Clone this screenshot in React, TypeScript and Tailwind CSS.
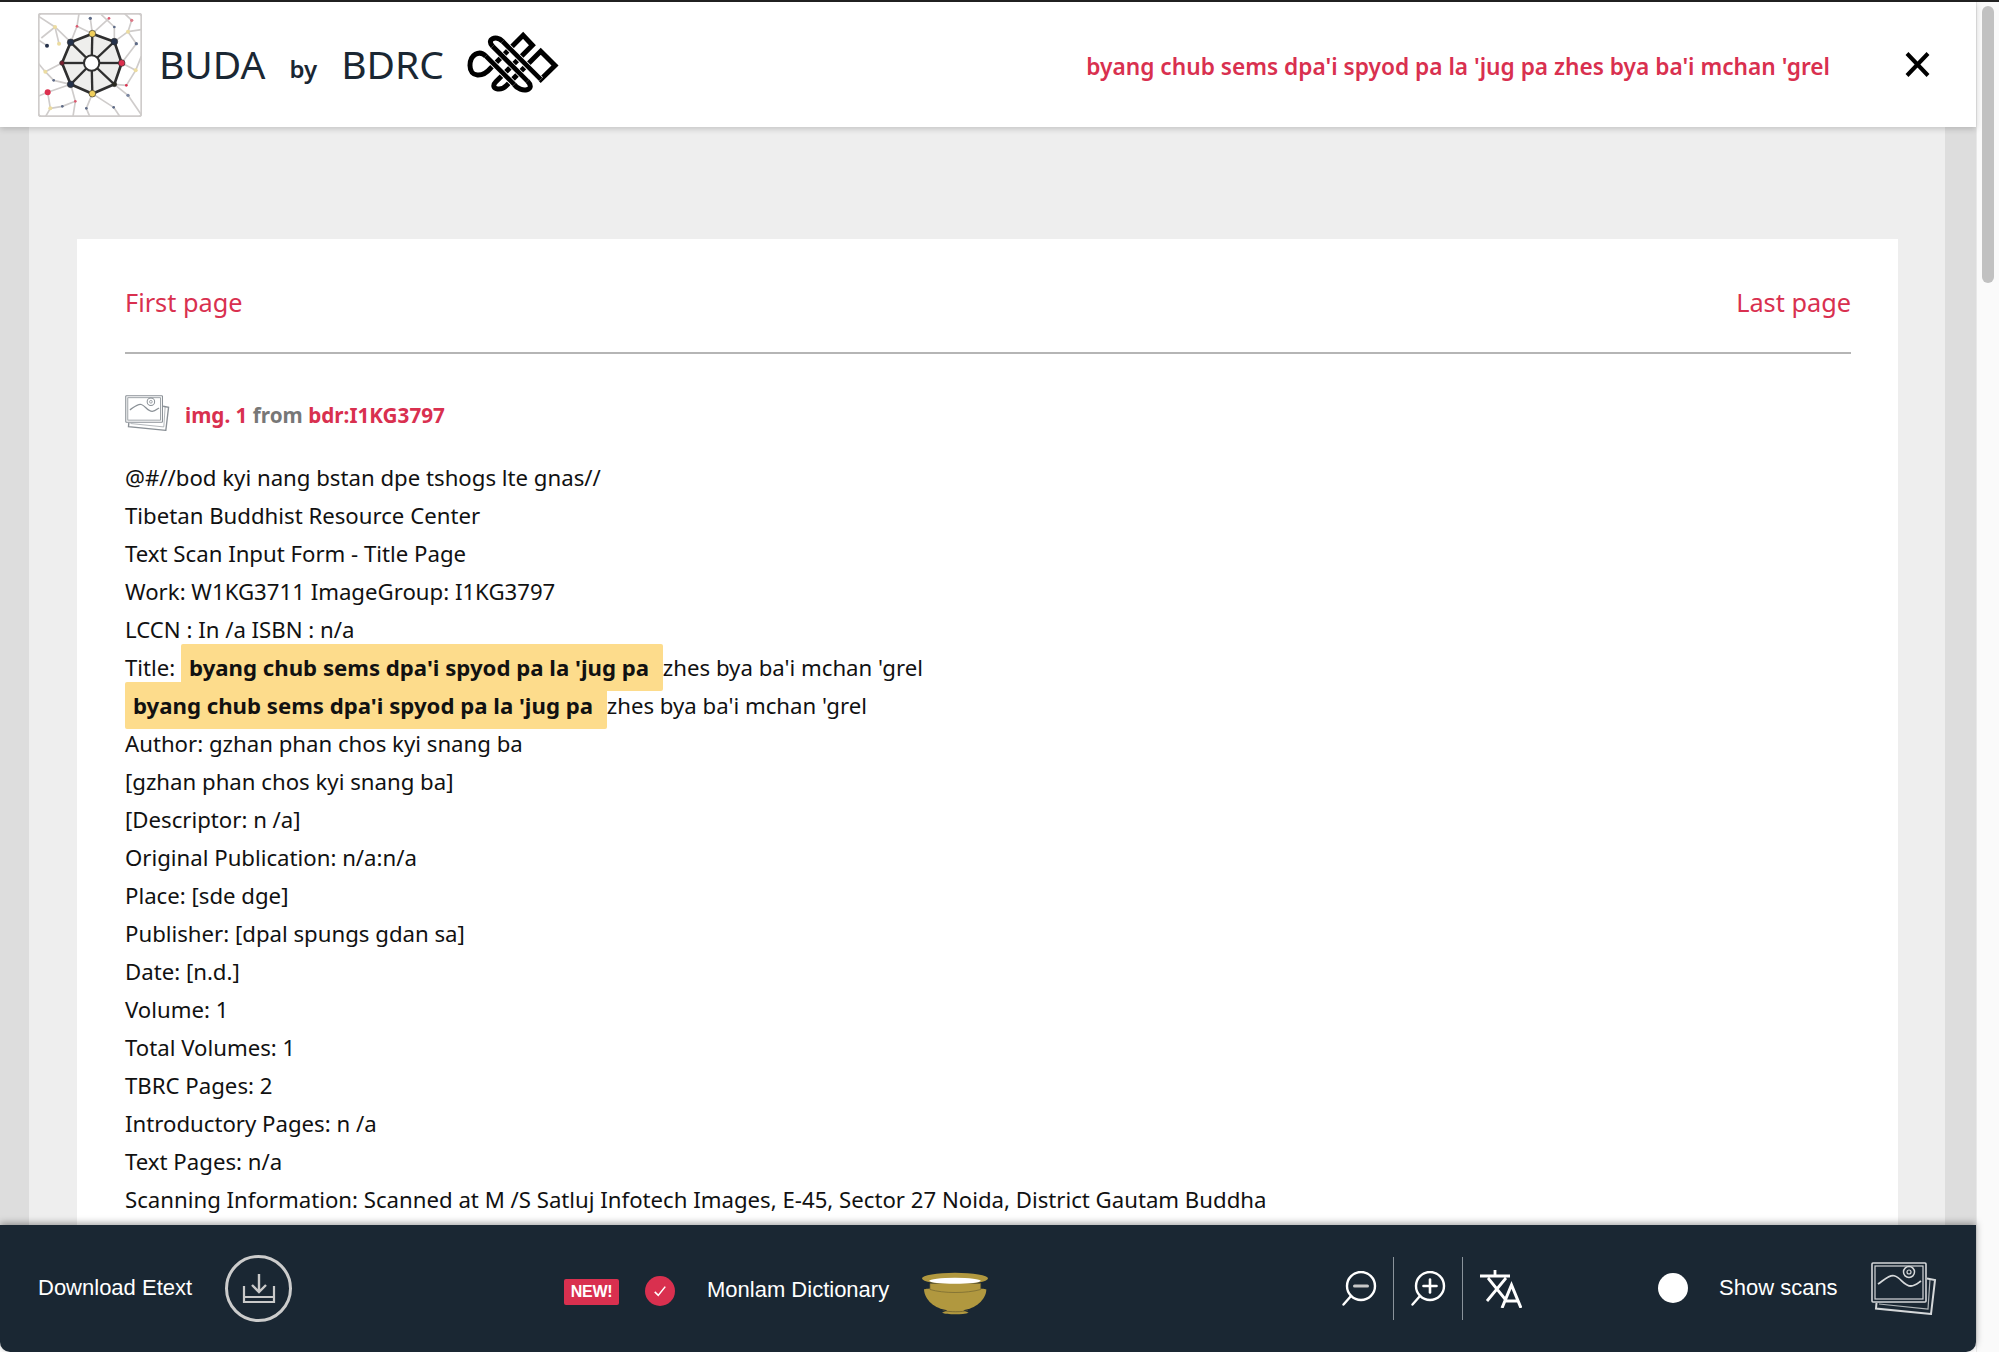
const lines = [
  "@#//bod kyi nang bstan dpe tshogs lte gnas//",
  "Tibetan Buddhist Resource Center",
  "Text Scan Input Form - Title Page",
  "Work: W1KG3711 ImageGroup: I1KG3797",
  "LCCN : In /a ISBN : n/a",
];

const linesAfter = [
  "Author: gzhan phan chos kyi snang ba",
  "[gzhan phan chos kyi snang ba]",
  "[Descriptor: n /a]",
  "Original Publication: n/a:n/a",
  "Place: [sde dge]",
  "Publisher: [dpal spungs gdan sa]",
  "Date: [n.d.]",
  "Volume: 1",
  "Total Volumes: 1",
  "TBRC Pages: 2",
  "Introductory Pages: n /a",
  "Text Pages: n/a",
  "Scanning Information: Scanned at M /S Satluj Infotech Images, E-45, Sector 27 Noida, District Gautam Buddha",
];

const octagon: [number, number, string, number][] = [
  [188, 82, "#f0cf5c", 10],
  [254, 106, "#25324a", 10],
  [276, 170, "#dc2f4e", 10],
  [254, 234, "#2a2a20", 7],
  [188, 262, "#f0cf5c", 10],
  [123, 234, "#25324a", 10],
  [97, 170, "#7a1f30", 7],
  [123, 108, "#25324a", 10],
];

const netLines = [
  "M27 30L76 62L124 108", "M76 62L35 95", "M76 62L88 112", "M148 22L142 60L123 108", "M142 60L188 82", "M182 36L188 82",
  "M238 36L188 82", "M254 62L254 106", "M254 62L215 25", "M295 76L254 106", "M295 76L306 42L285 22", "M295 76L335 70",
  "M320 112L276 170", "M320 112L295 76", "M318 192L276 170", "M318 192L335 150", "M290 237L254 234", "M290 237L318 192",
  "M295 267L254 234", "M295 267L335 325", "M252 303L188 262", "M252 303L270 330", "M170 306L188 262", "M170 306L180 330",
  "M137 285L123 234", "M137 285L98 300L62 306", "M62 306L54 258L123 234", "M54 258L25 270", "M72 222L123 234", "M72 222L47 196L97 170",
  "M47 196L25 170", "M62 306L48 330", "M137 285L130 330", "M52 118L25 100",
];

const netDots: [number, number, string, number][] = [
  [76, 62, "#ecdca0", 6], [52, 118, "#25324a", 6], [88, 112, "#ecdca0", 6], [142, 60, "#dc5a70", 4],
  [182, 36, "#5d6a86", 5], [238, 36, "#dc5a70", 4], [306, 42, "#dc7a88", 5], [254, 62, "#5d6a86", 4],
  [295, 76, "#ecdca0", 6], [320, 112, "#5d6a86", 5], [318, 192, "#ecdca0", 6], [290, 237, "#dc2f4e", 4],
  [295, 267, "#7a86a0", 5], [252, 303, "#5d6a86", 4], [170, 306, "#5d6a86", 4], [137, 285, "#dc5a70", 4],
  [98, 300, "#5d6a86", 4], [62, 306, "#ecdca0", 6], [54, 258, "#dc2f4e", 9], [72, 222, "#5d6a86", 4], [47, 196, "#ecdca0", 6],
];

function Logo() {
  return (
    <svg viewBox="25 20 312 312" className="h-[104px] w-[104px] shrink-0" aria-hidden>
      <rect x="27" y="22" width="308" height="308" rx="8" fill="#fff" stroke="#cfcccb" strokeWidth="6" />
      {netLines.map((d) => (
        <path key={d} d={d} fill="none" stroke="#cfcccb" strokeWidth="5" />
      ))}
      {netDots.map(([x, y, c, r]) => (
        <circle key={`${x}-${y}`} cx={x} cy={y} r={r} fill={c} />
      ))}
      <polygon points={octagon.map(([x, y]) => `${x},${y}`).join(" ")} fill="#eeeeec" stroke="#2f2f2f" strokeWidth="8" strokeLinejoin="round" />
      {octagon.map(([x, y]) => (
        <line key={`s${x}-${y}`} x1={x} y1={y} x2="186" y2="170" stroke="#2f2f2f" strokeWidth="7" />
      ))}
      <circle cx="186" cy="170" r="23" fill="#fff" stroke="#2f2f2f" strokeWidth="6" />
      {octagon.map(([x, y, c, r]) => (
        <circle key={`d${x}-${y}`} cx={x} cy={y} r={r} fill={c} stroke="#2f2f2f" strokeWidth="2" />
      ))}
    </svg>
  );
}

function Knot() {
  const over = "M110 105L195 190M235 180L130 75M160 60L275 175";
  return (
    <svg viewBox="50 30 280 200" className="ml-[22px] h-[67px] w-[93px] shrink-0" aria-hidden>
      <path
        d="M110 105L195 190C215 218 263 208 235 180L130 75C110 55 140 40 160 60L275 175L318 133L275 90L172 193C152 213 120 202 140 182L250 72L222 42L125 140C100 170 62 170 62 133C62 100 90 85 110 105Z"
        fill="none"
        stroke="#000"
        strokeWidth="15"
      />
      <path d={over} fill="none" stroke="#fff" strokeWidth="19" />
      <path d={over} fill="none" stroke="#000" strokeWidth="14" />
    </svg>
  );
}

function ImagesIcon({ className, color }: { className: string; color: string }) {
  return (
    <svg viewBox="0 0 66 53" fill="none" stroke={color} className={className} aria-hidden>
      <path d="M56 16.5L64 18L60 52L5 46.5L5.5 41" strokeWidth="2" />
      <path d="M8 42L57 47L59 17" strokeWidth="1.2" opacity="0.8" />
      <rect x="1" y="1" width="54" height="39" rx="1" strokeWidth="1.6" />
      <rect x="4" y="4" width="48" height="33" strokeWidth="1.2" />
      <path d="M7 22C13 18 19 12 24 14C30 16 33 24 40 24C44 24 47 21 50 19" strokeWidth="1.8" />
      <circle cx="38" cy="10" r="5.5" strokeWidth="1.5" />
      <circle cx="38" cy="10" r="2" strokeWidth="1.2" />
    </svg>
  );
}

function ZoomIcon({ plus }: { plus?: boolean }) {
  return (
    <svg viewBox="0 0 35 35" fill="none" stroke="#fff" strokeWidth="2.4" className="h-[35px] w-[35px] shrink-0" aria-hidden>
      <circle cx="19" cy="15" r="14" />
      <path d="M9 25L1.5 33.5" strokeLinecap="round" />
      <path d="M12.5 15H25.5" strokeLinecap="round" stroke={plus ? "#fff" : "#c8c8c8"} strokeWidth={plus ? 2.6 : 3} />
      {plus && <path d="M19 8.5V21.5" strokeLinecap="round" strokeWidth="2.6" />}
    </svg>
  );
}

function Bowl() {
  return (
    <svg viewBox="60 60 210 140" className="ml-[28px] mt-[10px] h-[47px] w-[70px] shrink-0" aria-hidden>
      <path d="M72 118C74 112 256 112 259 118C258 150 225 176 190 180L206 188C190 194 140 194 126 188L142 180C105 176 74 150 72 118Z" fill="#b1983f" />
      <path d="M90 100H242V118C200 130 130 130 90 118Z" fill="#b1983f" stroke="#6f6330" strokeWidth="2" />
      <ellipse cx="165" cy="85" rx="99" ry="17" fill="#b1983f" />
      <ellipse cx="165" cy="92" rx="77" ry="9" fill="#fff" />
      <path d="M128 181C150 186 185 186 204 181" fill="none" stroke="#5f5528" strokeWidth="2" />
    </svg>
  );
}

export default function App() {
  return (
    <div className="flex h-[1352px] w-[1999px] flex-col overflow-hidden bg-white font-['Noto_Sans',sans-serif]">
      <div className="h-[2px] shrink-0 bg-[#222]" />
      <div className="flex min-h-0 flex-1">
        <div className="flex w-[1976px] shrink-0 flex-col">
          <header className="relative z-10 flex h-[125px] shrink-0 items-center bg-white pl-[38px] shadow-[0_2px_6px_rgba(0,0,0,0.18)]">
            <Logo />
            <span className="mb-[3px] ml-[17px] text-[39px] leading-none text-[#1a2733]">BUDA</span>
            <span className="ml-[24px] mt-[8px] text-[24px] font-semibold leading-none text-[#1a2733]">by</span>
            <span className="mb-[3px] ml-[24px] text-[39px] leading-none text-[#1a2733]">BDRC</span>
            <Knot />
            <span className="ml-auto mt-[6px] text-[22.7px] font-semibold text-[#d9304f]">
              byang chub sems dpa'i spyod pa la 'jug pa zhes bya ba'i mchan 'grel
            </span>
            <svg viewBox="0 0 25 25" className="ml-[75px] mr-[46px] h-[25px] w-[25px] shrink-0" aria-hidden>
              <path d="M2 1.5L23 23.5M23 1.5L2 23.5" stroke="#000" strokeWidth="4" />
            </svg>
          </header>

          <main className="min-h-0 flex-1 overflow-hidden bg-[#dddddd] pl-[29px] pr-[31px]">
            <div className="h-full bg-[#eeeeee] pl-[48px] pr-[47px] pt-[112px]">
              <div className="h-full bg-white pl-[48px] pr-[47px] pt-[47px] text-[22.2px] leading-[38px] text-[#111]">
                <div className="flex justify-between border-b-2 border-[#b5b5b5] pb-[34px] text-[25.3px] leading-[32px] text-[#d9304f]">
                  <span>First page</span>
                  <span>Last page</span>
                </div>
                <div className="mb-[28px] mt-[41px] flex h-[36px] items-center">
                  <ImagesIcon className="h-[36px] w-[45px] shrink-0" color="#8a9096" />
                  <span className="ml-[15px] mt-[3px] text-[20.7px] font-bold text-[#d9304f]">
                    img. 1 <span className="text-[#777]">from</span> bdr:I1KG3797
                  </span>
                </div>
                {lines.map((l) => (
                  <div key={l}>{l}</div>
                ))}
                <div>
                  Title:{" "}
                  <span className="rounded-[2px] bg-[#fddc8c] px-[8px] py-[8px] font-bold">
                    byang chub sems dpa'i spyod pa la 'jug pa{" "}
                  </span>
                  zhes bya ba'i mchan 'grel
                </div>
                <div>
                  <span className="rounded-[2px] bg-[#fddc8c] px-[8px] py-[8px] font-bold">
                    byang chub sems dpa'i spyod pa la 'jug pa{" "}
                  </span>
                  zhes bya ba'i mchan 'grel
                </div>
                {linesAfter.map((l) => (
                  <div key={l}>{l}</div>
                ))}
              </div>
            </div>
          </main>

          <footer className="relative z-10 flex h-[127px] shrink-0 items-center rounded-b-[10px] bg-[#1a2733] pl-[38px] font-['Liberation_Sans',sans-serif] text-[22px] text-white shadow-[0_-2px_7px_rgba(0,0,0,0.35)]">
            <span className="mb-[2px] w-[156px] shrink-0 whitespace-nowrap">Download Etext</span>
            <div className="ml-[31px] flex h-[67px] w-[67px] shrink-0 items-center justify-center rounded-full border-[3px] border-[#ccc]">
              <svg viewBox="0 0 34 32" fill="none" stroke="#c9c9c9" className="h-[32px] w-[34px]" aria-hidden>
                <path d="M2 13V29H32V13" strokeWidth="2.2" />
                <path d="M2 24H32" strokeWidth="2" />
                <path d="M17 1V19M10 12L17 19L24 12" strokeWidth="2.4" />
              </svg>
            </div>
            <span className="ml-[272px] mt-[6px] flex h-[26px] w-[55px] shrink-0 items-center justify-center rounded-[2px] bg-[#d9304f] text-[16px] font-bold tracking-[-0.3px]">
              NEW!
            </span>
            <div className="ml-[26px] mt-[5px] flex h-[30px] w-[30px] shrink-0 items-center justify-center rounded-full bg-[#d9304f]">
              <svg viewBox="0 0 16 16" fill="none" stroke="#fff" strokeWidth="1.8" className="h-[14px] w-[14px]" aria-hidden>
                <path d="M2 9L6 13L14 3" />
              </svg>
            </div>
            <span className="ml-[32px] mt-[1px] w-[185px] shrink-0 whitespace-nowrap">Monlam Dictionary</span>
            <Bowl />
            <div className="ml-[352px] flex shrink-0 items-center">
              <ZoomIcon />
            </div>
            <div className="ml-[16px] h-[63px] w-px shrink-0 bg-[#8a939b]" />
            <div className="ml-[17px] flex shrink-0 items-center">
              <ZoomIcon plus />
            </div>
            <div className="ml-[16px] h-[63px] w-px shrink-0 bg-[#8a939b]" />
            <svg viewBox="0 0 42 38" fill="none" stroke="#fff" className="ml-[17px] h-[38px] w-[42px] shrink-0" aria-hidden>
              <path d="M0 6H30M15 0V6M8 8L25 29M26 8L7 31" strokeWidth="2.8" />
              <path d="M22 38L31.5 15L41 38M25 31H38" strokeWidth="3" />
            </svg>
            <div className="ml-[136px] mb-[2px] h-[30px] w-[30px] shrink-0 rounded-full bg-white" />
            <span className="mb-[2px] ml-[31px] w-[122px] shrink-0 whitespace-nowrap">Show scans</span>
            <ImagesIcon className="ml-[30px] h-[53px] w-[66px] shrink-0" color="#d5d8da" />
          </footer>
        </div>

        <div className="flex w-[23px] shrink-0 justify-center border-l border-[#e8e8e8] bg-[#fafafa] pt-[4px]">
          <div className="h-[277px] w-[12px] rounded-full bg-[#c1c1c1]" />
        </div>
      </div>
    </div>
  );
}
